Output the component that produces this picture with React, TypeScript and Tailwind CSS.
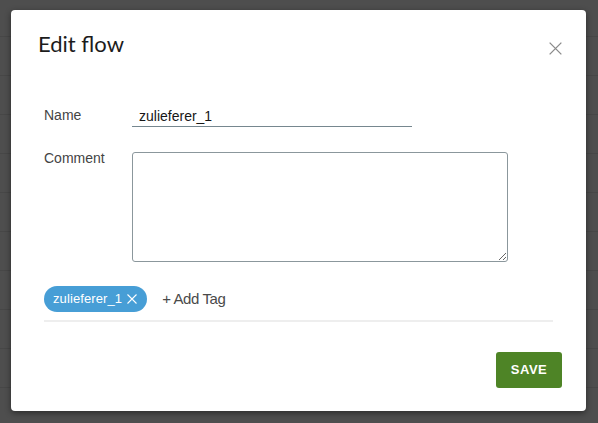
import React, { useState } from 'react';

const sans = { fontFamily: '"Liberation Sans", Arial, sans-serif' };
const heading = { fontFamily: 'Lato, "Liberation Sans", sans-serif' };

const CloseIcon: React.FC<{ size: number; className?: string; stroke?: number }> = ({ size, className, stroke = 1.3 }) => (
  <svg width={size} height={size} viewBox="0 0 12 12" className={className} fill="none">
    <path d="M0.6 0.6 L11.4 11.4 M11.4 0.6 L0.6 11.4" stroke="currentColor" strokeWidth={stroke} />
  </svg>
);

const App: React.FC = () => {
  const [name, setName] = useState('zulieferer_1');
  const [comment, setComment] = useState('');
  const [tags, setTags] = useState<string[]>(['zulieferer_1']);

  // rows of the table behind the overlay
  const rows = Array.from({ length: 11 });

  return (
    <div className="relative h-[423px] w-[598px] overflow-hidden bg-[#4e4e4e]" style={sans}>
      <div className="flex flex-col">
        <div className="h-[37px] border-b border-[#474747]" />
        {rows.map((_, i) => (
          <div key={i} className="h-[39px] border-b border-[#474747]" />
        ))}
      </div>

      <div className="absolute left-[11px] top-[10px] flex h-[401px] w-[575px] flex-col rounded-[4px] bg-white shadow-[0_2px_6px_rgba(0,0,0,0.45)]">
        <div className="flex items-start justify-between pl-[27px] pr-[24px] pt-[20px]">
          <h2 className="text-[22px] font-normal leading-[28px] text-[#1c1c1c]" style={heading}>
            Edit flow
          </h2>
          <button type="button" className="mt-[12px] block text-[#8a8a8a]">
            <CloseIcon size={13} className="block" stroke={1.2} />
          </button>
        </div>

        <div className="mt-[47px] px-[33px]">
          <div className="flex items-start">
            <label className="w-[88px] text-[14px] leading-[21px] text-[#444444]">Name</label>
            <input
              value={name}
              onChange={(e) => setName(e.target.value)}
              className="h-[22px] w-[280px] border-b border-[#76878f] px-[7px] text-[14px] text-[#161616] outline-none"
            />
          </div>

          <div className="mt-[21px] flex items-start">
            <label className="w-[88px] text-[14px] leading-[21px] text-[#444444]">Comment</label>
            <textarea
              value={comment}
              onChange={(e) => setComment(e.target.value)}
              className="mt-[4px] h-[110px] w-[376px] rounded-[3px] border border-[#8b979c] p-2 text-[14px] outline-none"
            />
          </div>

          <div className="mt-[24px] flex items-center">
            {tags.map((tag) => (
              <span
                key={tag}
                className="flex h-[26px] items-center gap-[5px] rounded-full bg-[#479ed6] pl-[9px] pr-[10px] text-[13px] tracking-[0.1px] text-white"
              >
                {tag}
                <button type="button" onClick={() => setTags(tags.filter((t) => t !== tag))} className="block">
                  <CloseIcon size={10} className="block" stroke={1.3} />
                </button>
              </span>
            ))}
            <button type="button" className="ml-[15px] text-[15px] tracking-[-0.4px] text-[#4a4a4a]">
              + Add Tag
            </button>
          </div>
          <div className="mt-[8px] h-[2px] w-[509px] bg-[#eeeeee]" />
        </div>

        <div className="mt-[30px] flex justify-end pr-[24px]">
          <button
            type="button"
            className="h-[36px] w-[66px] rounded-[3px] bg-[#4e8426] text-[13px] font-bold tracking-[0.5px] text-white"
          >
            SAVE
          </button>
        </div>
      </div>
    </div>
  );
};

export default App;
